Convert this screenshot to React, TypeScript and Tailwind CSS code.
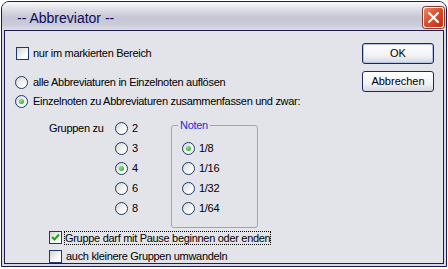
import type { ReactNode } from "react";

const FONT = { fontFamily: '"Liberation Sans", Arial, sans-serif' };

function Radio({ checked = false }: { checked?: boolean }) {
  return (
    <span className="flex h-[13px] w-[13px] shrink-0 items-center justify-center rounded-full border border-[#1d3a6b] bg-[linear-gradient(135deg,#d4d4cf,#ffffff_75%)]">
      {checked && (
        <span className="h-[5px] w-[5px] rounded-full bg-[radial-gradient(circle_at_40%_35%,#8ee68e,#1c9a1c)]" />
      )}
    </span>
  );
}

function Check({ checked = false }: { checked?: boolean }) {
  return (
    <span className="flex h-[13px] w-[13px] shrink-0 items-center justify-center border border-[#1d3a6b] bg-[linear-gradient(135deg,#d4d4cf,#ffffff_75%)]">
      {checked && (
        <svg width="11" height="11" viewBox="0 0 11 11">
          <polyline points="2,5 4.5,7.5 9,2.5" fill="none" stroke="#21a121" strokeWidth="2" />
        </svg>
      )}
    </span>
  );
}

function Row({ control, children, gap = "gap-[4px]" }: { control: ReactNode; children: ReactNode; gap?: string }) {
  return (
    <div className={`flex h-[13px] items-center ${gap} whitespace-nowrap`}>
      {control}
      <span className="leading-[13px]">{children}</span>
    </div>
  );
}

function Btn({ label, primary = false }: { label: string; primary?: boolean }) {
  return (
    <button
      className={`h-[21px] w-[72px] rounded-[3px] border border-[#1c2a5a] bg-[linear-gradient(to_bottom,#ffffff,#f2f2f6_60%,#d6d6e0)] text-[11px] leading-[19px] text-black ${
        primary ? "shadow-[inset_0_0_0_1px_#b4c4e8]" : ""
      }`}
    >
      {label}
    </button>
  );
}

export default function App() {
  return (
    <div className="h-[269px] w-[448px] bg-white pt-[1px] pl-[1px] text-[11px] tracking-[-0.3px] text-black" style={FONT}>
      <div className="flex h-[266px] w-[446px] flex-col overflow-hidden rounded-t-[8px] border border-[#1c1c50] bg-[#d8d8e2]">
        {/* title bar */}
        <div className="flex h-[28px] shrink-0 justify-between bg-[linear-gradient(to_bottom,#fbfbfd,#e6e6ee_18%,#c6c6d6_55%,#cacad8_80%,#dedee8)] pl-[15px] pr-[2px]">
          <span className="pt-[9px] text-[14px] leading-[14px] tracking-normal text-[#0c0c58]">-- Abbreviator --</span>
          <div className="mt-[5px] flex h-[21px] w-[21px] items-center justify-center rounded-[3px] border border-white bg-[linear-gradient(135deg,#ec8a6c,#d8502e_45%,#b83218)] shadow-[0_0_0_1px_#8a3a2a]">
            <svg width="13" height="13" viewBox="0 0 13 13">
              <path d="M2 2 L11 11 M11 2 L2 11" stroke="#ffffff" strokeWidth="2.2" strokeLinecap="round" />
            </svg>
          </div>
        </div>

        {/* client area */}
        <div className="mx-[2px] mb-[2px] flex h-[234px] flex-col border border-[#1c1c50] bg-[#e3e3ea]">
          {/* top section */}
          <div className="flex h-[77px] shrink-0 justify-between">
            <div className="flex flex-col pl-[10px] pt-[16px]">
              <div className="ml-[1px]">
                <Row control={<Check />}>nur im markierten Bereich</Row>
              </div>
              <div className="mt-[16px]">
                <Row control={<Radio />} gap="gap-[5px]">alle Abbreviaturen in Einzelnoten auflösen</Row>
              </div>
              <div className="mt-[6px]">
                <Row control={<Radio checked />} gap="gap-[5px]">Einzelnoten zu Abbreviaturen zusammenfassen und zwar:</Row>
              </div>
            </div>
            <div className="flex flex-col gap-[7px] pr-[9px] pt-[12px] tracking-normal">
              <Btn label="OK" primary />
              <Btn label="Abbrechen" />
            </div>
          </div>

          {/* groups section */}
          <div className="flex h-[123px] shrink-0 items-start pl-[44px]">
            <span className="mt-[14px] w-[66px] leading-[13px]">Gruppen zu</span>
            <div className="mt-[14px] flex w-[56px] flex-col gap-[7px]">
              {["2", "3", "4", "6", "8"].map((v) => (
                <Row key={v} control={<Radio checked={v === "4"} />}>
                  {v}
                </Row>
              ))}
            </div>
            <fieldset className="mt-[11px] h-[109px] w-[87px] rounded-[3px] border border-[#a4a4b0] pl-[6px] pt-[10px]">
              <legend className="px-[2px] leading-[13px] text-[#1830d8]">Noten</legend>
              <div className="flex flex-col gap-[7px] pl-[4px]">
                {["1/8", "1/16", "1/32", "1/64"].map((v) => (
                  <Row key={v} control={<Radio checked={v === "1/8"} />}>
                    {v}
                  </Row>
                ))}
              </div>
            </fieldset>
          </div>

          {/* bottom checkboxes */}
          <div className="flex flex-col gap-[6px] pl-[44px]">
            <div className="flex h-[13px] items-center gap-[2px] whitespace-nowrap">
              <Check checked />
              <span className="h-[14px] border border-dotted border-black leading-[12px]">
                Gruppe darf mit Pause beginnen oder enden
              </span>
            </div>
            <Row control={<Check />}>auch kleinere Gruppen umwandeln</Row>
          </div>
        </div>
      </div>
    </div>
  );
}
